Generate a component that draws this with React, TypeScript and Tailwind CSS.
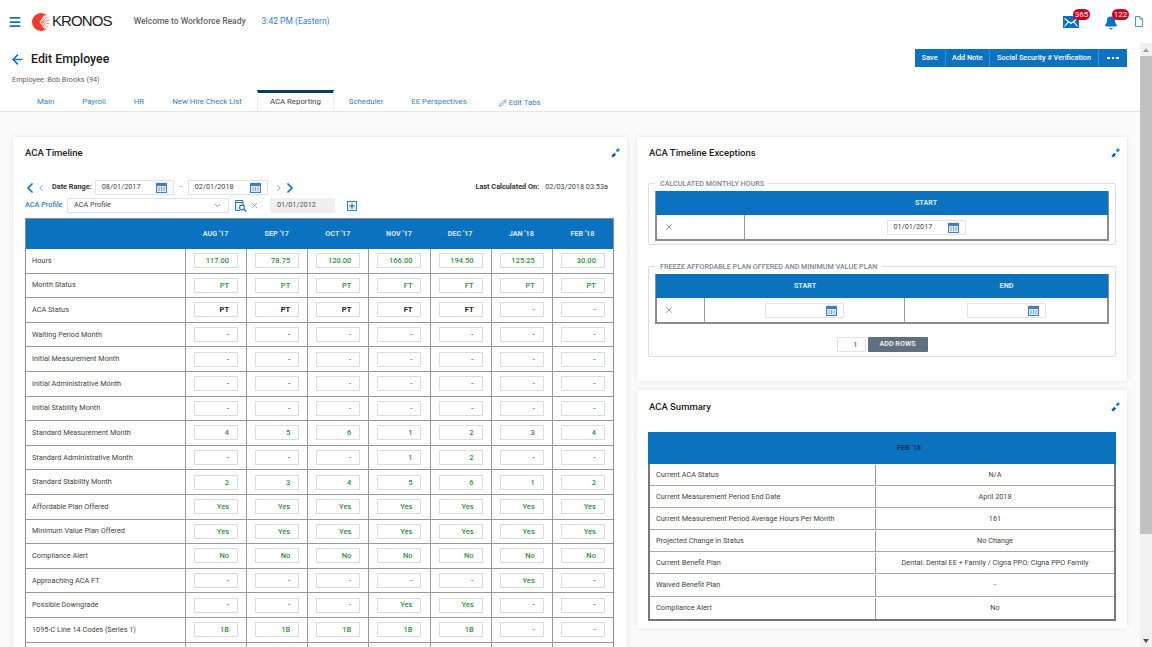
import { ChevronLeft, ChevronRight, ChevronDown, X, Menu, ArrowLeft, Pencil, Bell, Plus } from 'lucide-react';

const months = ["AUG '17", "SEP '17", "OCT '17", "NOV '17", "DEC '17", "JAN '18", "FEB '18"];

const dashes = ['-', '-', '-', '-', '-', '-', '-'];

const timelineRows = [
  { label: 'Hours', values: ['117.00', '78.75', '120.00', '166.00', '194.50', '125.25', '30.00'] },
  { label: 'Month Status', values: ['PT', 'PT', 'PT', 'FT', 'FT', 'PT', 'PT'] },
  { label: 'ACA Status', values: ['PT', 'PT', 'PT', 'FT', 'FT', '-', '-'], strong: 5 },
  { label: 'Waiting Period Month', values: dashes },
  { label: 'Initial Measurement Month', values: dashes },
  { label: 'Initial Administrative Month', values: dashes },
  { label: 'Initial Stability Month', values: dashes },
  { label: 'Standard Measurement Month', values: ['4', '5', '6', '1', '2', '3', '4'] },
  { label: 'Standard Administrative Month', values: ['-', '-', '-', '1', '2', '-', '-'] },
  { label: 'Standard Stability Month', values: ['2', '3', '4', '5', '6', '1', '2'] },
  { label: 'Affordable Plan Offered', values: ['Yes', 'Yes', 'Yes', 'Yes', 'Yes', 'Yes', 'Yes'] },
  { label: 'Minimum Value Plan Offered', values: ['Yes', 'Yes', 'Yes', 'Yes', 'Yes', 'Yes', 'Yes'] },
  { label: 'Compliance Alert', values: ['No', 'No', 'No', 'No', 'No', 'No', 'No'] },
  { label: 'Approaching ACA FT', values: ['-', '-', '-', '-', '-', 'Yes', '-'] },
  { label: 'Possible Downgrade', values: ['-', '-', '-', 'Yes', 'Yes', '-', '-'] },
  { label: '1095-C Line 14 Codes (Series 1)', values: ['1B', '1B', '1B', '1B', '1B', '-', '-'] },
  // next row is cut by the window, only the tops of its boxes show
  { label: '', values: ['', '', '', '', '', '', ''] },
];

const summaryRows = [
  ['Current ACA Status', 'N/A'],
  ['Current Measurement Period End Date', 'April 2018'],
  ['Current Measurement Period Average Hours Per Month', '161'],
  ['Projected Change in Status', 'No Change'],
  ['Current Benefit Plan', 'Dental: Dental EE + Family / Cigna PPO: Cigna PPO Family'],
  ['Waived Benefit Plan', '-'],
  ['Compliance Alert', 'No'],
];

function CalendarIcon() {
  return (
    <svg width="11" height="11" viewBox="0 0 11 11" className="shrink-0">
      <rect x="0.5" y="1.5" width="10" height="9" fill="#dbe9f6" stroke="#3d7fc1" />
      <rect x="0.5" y="1.5" width="10" height="2.5" fill="#3d7fc1" />
      <path d="M3 0.5v2M8 0.5v2" stroke="#3d7fc1" />
      <path d="M2.5 6h1M5 6h1M7.5 6h1M2.5 8h1M5 8h1M7.5 8h1" stroke="#2b5f96" />
    </svg>
  );
}

function PinIcon() {
  return (
    <svg width="10" height="10" viewBox="0 0 10 10">
      <path d="M5.6 3.4 8 1" stroke="#1a86dc" strokeWidth="2.6" />
      <path d="M1.2 8.6 4.2 5.8" stroke="#0b5fa8" strokeWidth="2.6" />
    </svg>
  );
}

function MailIcon() {
  return (
    <svg width="16" height="12" viewBox="0 0 16 12">
      <rect width="16" height="12" fill="#0b72c0" />
      <path d="M1.5 2.5 8 7.5 14.5 2.5M1.5 10.5 5.5 5.5M14.5 10.5 10.5 5.5" fill="none" stroke="#fff" strokeWidth="1.2" />
    </svg>
  );
}

function DocIcon() {
  return (
    <svg width="8" height="11" viewBox="0 0 8 11">
      <path d="M0.5 0.5H5L7.5 3V10.5H0.5Z" fill="#fff" stroke="#4a94d4" />
      <path d="M5 0.5V3H7.5" fill="none" stroke="#4a94d4" />
    </svg>
  );
}

function KronosMark() {
  return (
    <svg width="18" height="18" viewBox="0 0 19 19" className="shrink-0">
      <circle cx="9.5" cy="9.5" r="9.5" fill="#ee3b2b" />
      <path d="M13 2 8 9.5 13 17 19 17 19 2Z" fill="#fff" />
      <path d="M9.5 9.5 15 1.5M9.5 9.5 17 4M9.5 9.5 18.5 7.5M9.5 9.5 18.5 11.5M9.5 9.5 17 15M9.5 9.5 15 17.5" stroke="#f3897f" strokeWidth="1" />
    </svg>
  );
}

function DateField({ value, className }: { value?: string; className: string }) {
  return (
    <div className={`flex h-[15px] items-center justify-between border border-[#e3e3e3] bg-white pl-[6px] pr-[6px] text-[7.3px] text-[#444] ${className}`}>
      <span>{value}</span>
      <CalendarIcon />
    </div>
  );
}

function Card({ title, className, headerClassName, children }: { title: string; className?: string; headerClassName?: string; children: React.ReactNode }) {
  return (
    <section className={`bg-white shadow-[0_0_5px_rgba(0,0,0,0.09)] ${className ?? ''}`}>
      <div className={`flex items-center justify-between pl-[12px] pr-[6px] ${headerClassName ?? 'h-[32px]'}`}>
        <h2 className="text-[9.5px] font-medium text-[#222]">{title}</h2>
        <PinIcon />
      </div>
      {children}
    </section>
  );
}

function Fieldset({ legend, className, children }: { legend: string; className?: string; children: React.ReactNode }) {
  return (
    <div className={`relative rounded-[2px] border border-[#dedede] px-[6px] pt-[7px] ${className ?? ''}`}>
      <span className="absolute left-[6px] top-[-5px] bg-white px-[5px] text-[7.2px] font-medium leading-[10px] text-[#7a8794]">{legend}</span>
      {children}
    </div>
  );
}

function TimelineTable() {
  return (
    <div className="border-x border-t border-[#8d8d8d]">
      <div className="grid h-[30px] grid-cols-[159px_repeat(7,minmax(0,1fr))] items-center bg-[#0b72c0] text-center text-[7.2px] font-bold text-[#dcecf8]">
        <div />
        {months.map((m) => (
          <div key={m}>{m}</div>
        ))}
      </div>
      {timelineRows.map((row, n) => (
        <div key={n} className="grid h-[24.6px] grid-cols-[159px_repeat(7,minmax(0,1fr))] border-b border-[#999]">
          <div className="flex items-center pl-[6px] pt-[1px] text-[7.3px] text-[#444]">{row.label}</div>
          {row.values.map((v, i) => (
            <div key={i} className="flex items-center justify-center border-l border-[#999]">
              <div
                className={`flex h-[15px] w-[44px] items-center justify-end border border-[#dcdcdc] pr-[8px] text-[7.5px] ${
                  row.strong && i < row.strong ? 'font-bold text-[#222]' : 'font-medium text-[#2f8f3c]'
                }`}
              >
                {v}
              </div>
            </div>
          ))}
        </div>
      ))}
    </div>
  );
}

function TimelineCard() {
  return (
    <Card title="ACA Timeline" className="h-[600px]">
      <div className="pl-[12px] pr-[13px]">
        <div className="mt-[11px] flex h-[15px] items-center text-[7.3px] text-[#444]">
          <ChevronLeft size={16} strokeWidth={2.6} className="ml-[-3px] shrink-0 text-[#0b72c0]" />
          <ChevronLeft size={10} strokeWidth={2} className="ml-[-2px] shrink-0 text-[#4a8fd0]" />
          <span className="ml-[6px] font-bold text-[#333]">Date Range:</span>
          <DateField value="08/01/2017" className="ml-[3px] w-[79px]" />
          <span className="mx-[6px] text-[#777]">-</span>
          <DateField value="02/01/2018" className="w-[80px]" />
          <ChevronRight size={10} strokeWidth={2} className="ml-[6px] shrink-0 text-[#4a8fd0]" />
          <ChevronRight size={16} strokeWidth={2.6} className="ml-[-2px] shrink-0 text-[#0b72c0]" />
          <span className="ml-auto font-bold text-[#333]">Last Calculated On:</span>
          <span className="ml-[6px] mr-[6px]">02/03/2018 03:53a</span>
        </div>
        <div className="mt-[3px] flex h-[15px] items-center text-[7.3px] text-[#444]">
          <span className="w-[42px] shrink-0 whitespace-nowrap font-medium text-[#2f7fc4]">ACA Profile</span>
          <div className="flex h-[15px] w-[162px] shrink-0 items-center justify-between border border-[#e3e3e3] pl-[6px] pr-[6px]">
            <span>ACA Profile</span>
            <ChevronDown size={9} className="text-[#3d7fc1]" />
          </div>
          <svg width="12" height="12" viewBox="0 0 12 12" className="ml-[6px] shrink-0">
            <path d="M0.5 0.5H8V5M5 10.5H0.5V0.5" fill="#dbe9f6" stroke="#2f7fc4" />
            <path d="M0.5 2.5H8" stroke="#2f7fc4" />
            <circle cx="7" cy="7.5" r="2.4" fill="#fff" stroke="#2f6fa8" strokeWidth="1.1" />
            <path d="M8.8 9.2 11.4 11.6" stroke="#2f6fa8" strokeWidth="1.4" />
          </svg>
          <X size={9} strokeWidth={2} className="ml-[3px] shrink-0 text-[#8a8a8a]" />
          <div className="ml-[11px] flex h-[15px] w-[65px] shrink-0 items-center bg-[#efefef] pl-[7px] text-[#555]">01/01/2012</div>
          <div className="ml-[12px] flex size-[10px] shrink-0 items-center justify-center border border-[#2f7fc4] bg-[#eaf3fb]">
            <Plus size={8} strokeWidth={3} className="text-[#0b5fa0]" />
          </div>
        </div>
        <div className="mt-[5px]">
          <TimelineTable />
        </div>
      </div>
    </Card>
  );
}

function ExceptionsCard() {
  return (
    <Card title="ACA Timeline Exceptions" className="h-[244px]">
      <div className="px-[11px] pt-[14px]">
        <Fieldset legend="CALCULATED MONTHLY HOURS" className="h-[62px]">
          <div className="border-x-2 border-b-2 border-[#8d8d8d]">
            <div className="-mx-[1px] flex h-[24px] items-center justify-center bg-[#0b72c0] pl-[88px] text-[7.2px] font-bold text-[#dcecf8]">START</div>
            <div className="flex h-[24px]">
              <div className="flex w-[88px] items-center border-r border-[#999] pl-[7px]">
                <X size={10} strokeWidth={2} className="text-[#8a8a8a]" />
              </div>
              <div className="flex flex-1 items-center justify-center">
                <DateField value="01/01/2017" className="w-[79px]" />
              </div>
            </div>
          </div>
        </Fieldset>
        <Fieldset legend="FREEZE AFFORDABLE PLAN OFFERED AND MINIMUM VALUE PLAN" className="mt-[21px] h-[91px]">
          <div className="border-x-2 border-b-2 border-[#8d8d8d]">
            <div className="-mx-[1px] grid h-[24px] grid-cols-[49px_200px_1fr] items-center bg-[#0b72c0] text-center text-[7.2px] font-bold text-[#dcecf8]">
              <div />
              <div>START</div>
              <div>END</div>
            </div>
            <div className="grid h-[24px] grid-cols-[48px_200px_1fr]">
              <div className="flex items-center border-r border-[#999] pl-[7px]">
                <X size={10} strokeWidth={2} className="text-[#8a8a8a]" />
              </div>
              <div className="flex items-center justify-center border-r border-[#999]">
                <DateField className="w-[79px]" />
              </div>
              <div className="flex items-center justify-center">
                <DateField className="w-[79px]" />
              </div>
            </div>
          </div>
          <div className="mt-[13px] flex items-center justify-center gap-[2px]">
            <div className="flex h-[15px] w-[29px] items-center justify-end border border-[#e3e3e3] pr-[7px] text-[7.5px] text-[#444]">1</div>
            <button className="h-[15px] w-[60px] rounded-[1px] bg-[#5f6f82] text-[7.2px] font-bold text-[#e6eaee]">ADD ROWS</button>
          </div>
        </Fieldset>
      </div>
    </Card>
  );
}

function SummaryCard() {
  return (
    <Card title="ACA Summary" className="mt-[9px] h-[238px]" headerClassName="h-[34px]">
      <div className="mx-[11px] mt-[8px] border-x-2 border-b-2 border-[#777]">
        <div className="-mx-[2px] flex h-[32px] items-center justify-center bg-[#0b72c0] pl-[54px] pt-[1px] text-[7.2px] font-bold text-[#0b2f50]">FEB '18</div>
        {summaryRows.map(([label, value]) => (
          <div key={label} className="grid h-[22.1px] grid-cols-[226px_1fr] border-b border-[#aaa] pt-[1px] text-[7.3px] text-[#444] last:border-b-0">
            <div className="flex items-center border-r border-[#999] pl-[6px]">{label}</div>
            <div className="flex items-center justify-center">{value}</div>
          </div>
        ))}
      </div>
    </Card>
  );
}

function Scrollbar() {
  return (
    <div className="flex w-[12px] shrink-0 flex-col bg-[#f1f1f1]">
      <div className="flex h-[13px] items-center justify-center">
        <div className="h-0 w-0 border-x-[3px] border-b-[4px] border-x-transparent border-b-[#a3a3a3]" />
      </div>
      <div className="h-[478px] bg-[#c1c1c1]" />
      <div className="flex-1" />
      <div className="flex h-[13px] items-center justify-center">
        <div className="h-0 w-0 border-x-[3px] border-t-[4px] border-x-transparent border-t-[#505050]" />
      </div>
    </div>
  );
}

export default function App() {
  const tabs = ['Main', 'Payroll', 'HR', 'New Hire Check List', 'ACA Reporting', 'Scheduler', 'EE Perspectives'];

  return (
    <div className="flex h-[647px] w-[1152px] flex-col overflow-hidden bg-white font-[Roboto,sans-serif]">
      {/* Top Bar */}
      <header className="flex h-[43px] shrink-0 items-center pl-[8px]">
        <Menu size={14} strokeWidth={3} className="text-[#1673bd]" />
        <div className="ml-[10px] flex items-center">
          <KronosMark />
          <span className="ml-[2px] font-['Liberation_Sans',sans-serif] text-[15px] tracking-[-0.9px] text-[#222]">KRONOS</span>
        </div>
        <span className="ml-[22px] text-[8.5px] font-medium text-[#666]">Welcome to Workforce Ready</span>
        <span className="ml-[16px] text-[8.5px] text-[#2f7fc4]">3:42 PM (Eastern)</span>
        <div className="relative ml-auto mr-[9px] flex items-center">
          <div className="relative mr-[25px] mt-[1px]">
            <MailIcon />
            <span className="absolute left-[10px] top-[-7px] flex h-[11px] w-[17px] items-center justify-center rounded-full bg-[#d0021b] text-[8px] text-white">365</span>
          </div>
          <div className="relative mr-[17px] mt-[2px]">
            <Bell size={14} fill="#0b72c0" className="text-[#0b72c0]" />
            <span className="absolute left-[8px] top-[-6.5px] flex h-[11px] w-[17px] items-center justify-center rounded-full bg-[#d0021b] text-[8px] text-white">122</span>
          </div>
          <DocIcon />
        </div>
      </header>

      <div className="flex min-h-0 flex-1">
        <div className="min-w-0 flex-1">
          {/* Title */}
          <div className="flex h-[32px] items-start justify-between pr-[13px]">
            <div className="flex h-[32px] items-center pl-[10px]">
              <ArrowLeft size={15} strokeWidth={2.6} className="text-[#1673bd]" />
              <h1 className="ml-[6px] text-[12.4px] font-medium text-[#222]">Edit Employee</h1>
            </div>
            <div className="mt-[6px] flex h-[18px] items-center bg-[#0b72c0] text-[7.3px] font-medium text-white">
              <span className="flex h-full items-center border-r border-[#3a8ecf] px-[7px]">Save</span>
              <span className="flex h-full items-center border-r border-[#3a8ecf] px-[6.5px]">Add Note</span>
              <span className="flex h-full items-center border-r border-[#3a8ecf] px-[7px]">Social Security # Verification</span>
              <span className="flex h-full w-[28px] items-center justify-center gap-[2px]">
                <i className="size-[2.5px] bg-white" />
                <i className="size-[2.5px] bg-white" />
                <i className="size-[2.5px] bg-white" />
              </span>
            </div>
          </div>
          <div className="mb-[5px] h-[10px] pl-[12px] text-[7.3px] leading-[10px] text-[#666]">Employee: Bob Brooks (94)</div>

          {/* Tabs */}
          <div className="flex h-[22px] items-start gap-[2px] border-b border-[#e6e6e6] pl-[24px]">
            {tabs.map((t) => (
              <div
                key={t}
                className={`flex h-[21px] items-center text-[7.8px] ${
                  t === 'ACA Reporting'
                    ? 'border-x border-t-[3px] border-x-[#eeeeee] border-t-[#0b3a63] bg-white px-[12px] text-[#444]'
                    : 'px-[13px] pt-[3px] text-[#2f7fc4]'
                }`}
              >
                {t}
              </div>
            ))}
            <div className="ml-[17px] flex h-[21px] items-center gap-[2px] pt-[4px] text-[7.8px] text-[#2f7fc4]">
              <Pencil size={8} />
              <span>Edit Tabs</span>
            </div>
          </div>

          {/* Panels */}
          <div className="grid h-[560px] grid-cols-[614px_490px] gap-x-[10px] bg-[#fafafa] pl-[13px] pt-[25px]">
            <TimelineCard />
            <div>
              <ExceptionsCard />
              <SummaryCard />
            </div>
          </div>
        </div>
        <Scrollbar />
      </div>
    </div>
  );
}
